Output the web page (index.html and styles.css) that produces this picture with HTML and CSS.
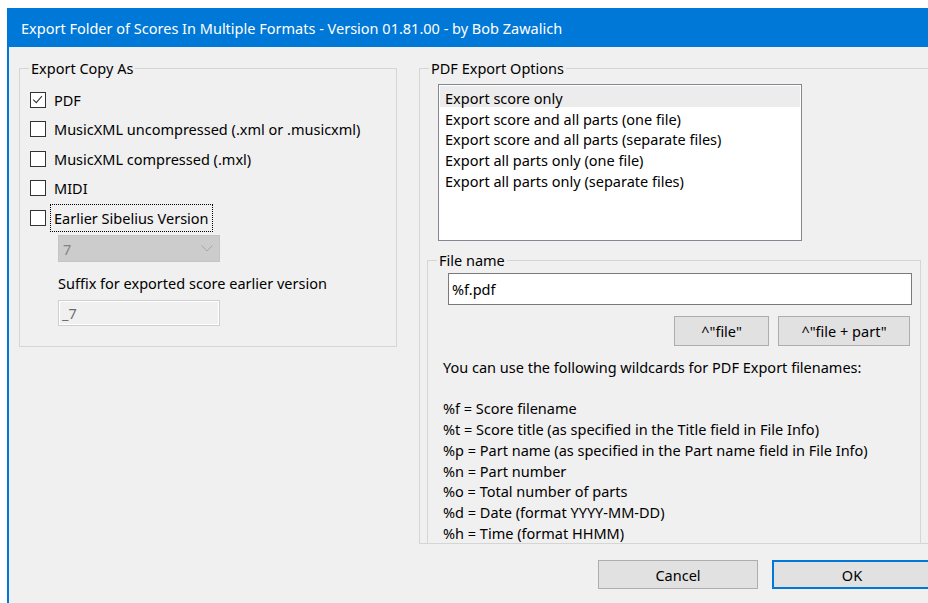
FILE: index.html
```html
<!DOCTYPE html>
<html lang="en">
<head>
<meta charset="utf-8">
<title>Export Folder of Scores In Multiple Formats</title>
<link rel="stylesheet" href="styles.css">
</head>
<body>
<div class="window">
  <div class="titlebar">Export Folder of Scores In Multiple Formats - Version 01.81.00 - by Bob Zawalich</div>
  <div class="client">
    <div class="columns">
      <fieldset class="group group-copy">
        <legend>Export Copy As</legend>
        <div class="group-body copy-body">
          <label class="check">
            <span class="box"><svg viewBox="0 0 16 16" width="14" height="14"><polyline points="2.5,7.5 6,11 12.5,3.5" fill="none" stroke="#333" stroke-width="1.2"/></svg></span>
            <span class="check-text">PDF</span>
          </label>
          <label class="check"><span class="box"></span><span class="check-text">MusicXML uncompressed (.xml or .musicxml)</span></label>
          <label class="check"><span class="box"></span><span class="check-text">MusicXML compressed (.mxl)</span></label>
          <label class="check"><span class="box"></span><span class="check-text">MIDI</span></label>
          <label class="check"><span class="box"></span><span class="check-text focused">Earlier Sibelius Version</span></label>
          <div class="sub">
            <div class="combo">
              <span>7</span>
              <svg viewBox="0 0 12 7" width="12" height="7"><polyline points="0.5,0.5 6,6 11.5,0.5" fill="none" stroke="#a6a6a6" stroke-width="1"/></svg>
            </div>
            <div class="sub-label">Suffix for exported score earlier version</div>
            <div class="textbox disabled">_7</div>
          </div>
        </div>
      </fieldset>

      <fieldset class="group group-pdf">
        <legend>PDF Export Options</legend>
        <div class="group-body pdf-body">
          <ul class="listbox">
            <li class="selected">Export score only</li>
            <li>Export score and all parts (one file)</li>
            <li>Export score and all parts (separate files)</li>
            <li>Export all parts only (one file)</li>
            <li>Export all parts only (separate files)</li>
          </ul>
          <fieldset class="group group-file">
            <legend>File name</legend>
            <div class="file-body">
              <div class="textbox filename">%f.pdf</div>
              <div class="macro-buttons">
                <button class="btn btn-file">^"file"</button>
                <button class="btn btn-part">^"file + part"</button>
              </div>
              <div class="help">
                <p>You can use the following wildcards for PDF Export filenames:</p>
                <p class="blank">&nbsp;</p>
                <p>%f = Score filename</p>
                <p>%t = Score title (as specified in the Title field in File Info)</p>
                <p>%p = Part name (as specified in the Part name field in File Info)</p>
                <p>%n = Part number</p>
                <p>%o = Total number of parts</p>
                <p>%d = Date (format YYYY-MM-DD)</p>
                <p>%h = Time (format HHMM)</p>
              </div>
            </div>
          </fieldset>
        </div>
      </fieldset>
    </div>
    <div class="footer">
      <button class="btn btn-dialog">Cancel</button>
      <button class="btn btn-dialog btn-default">OK</button>
    </div>
  </div>
</div>
</body>
</html>
```

FILE: styles.css
```css
html, body {
  margin: 0;
  padding: 0;
  background: #ffffff;
  overflow: hidden;
}

body {
  font-family: "Noto Sans", "Open Sans", sans-serif;
  font-size: 14.5px;
  color: #000;
}

.window {
  margin: 8px 0 0 7px;
  width: 940px;
  height: 595px;
  border-left: 2px solid #0078d7;
  display: flex;
  flex-direction: column;
  background: #f0f0f0;
}

.titlebar {
  height: 39px;
  margin-left: -2px;
  padding-left: 14px;
  background: #0078d7;
  color: #fff;
  font-size: 14.5px;
  line-height: 40px;
  white-space: nowrap;
}

.client {
  flex: 1;
  display: flex;
  flex-direction: column;
}

.columns {
  display: flex;
  align-items: flex-start;
  gap: 22px;
  margin-top: 11px;
  padding: 0 10px;
}

/* group boxes */
.group {
  margin: 0;
  padding: 0;
  min-width: 0;
  border: 1px solid #d5d5d5;
}

.group > legend {
  margin-left: 9px;
  padding: 0 2px;
  line-height: 20px;
}

.group-copy {
  width: 378px;
  box-sizing: border-box;
  flex: none;
}

.copy-body {
  padding: 7px 0 20px 10px;
}

.check {
  display: flex;
  align-items: center;
  height: 29.5px;
}

.box {
  width: 16px;
  height: 16px;
  box-sizing: border-box;
  border: 1px solid #333;
  background: #fff;
  display: flex;
  align-items: center;
  justify-content: center;
  flex: none;
}

.check-text {
  margin-left: 4px;
  padding: 3px 3px;
  line-height: 20px;
  border: 1px solid transparent;
  white-space: nowrap;
}

.check-text.focused {
  border: 1px dotted #000;
}

.sub {
  padding-left: 28px;
  margin-top: 2.5px;
}

.combo {
  width: 162px;
  height: 27px;
  box-sizing: border-box;
  border: 1px solid #c4c4c4;
  background: #cccccc;
  color: #838383;
  display: flex;
  align-items: center;
  justify-content: space-between;
  padding: 0 6px 0 4px;
}

.sub-label {
  margin-top: 11px;
  line-height: 20px;
}

.textbox {
  box-sizing: border-box;
  border: 1px solid #7a7a7a;
  background: #fff;
  display: flex;
  align-items: center;
  padding-left: 3px;
}

.textbox.disabled {
  margin-top: 7px;
  width: 162px;
  height: 26px;
  border-color: #cfcfcf;
  background: #f0f0f0;
  box-shadow: inset 0 0 0 1px #fff;
  color: #6d6d6d;
}

/* right column */
.group-pdf {
  flex: 1;
}

.pdf-body {
  height: 465px;
  overflow: hidden;
  padding-left: 18px;
}

.listbox {
  list-style: none;
  margin: 6px 0 0 0;
  padding: 1px;
  width: 364px;
  height: 157px;
  box-sizing: border-box;
  border: 1px solid #828790;
  background: #fff;
}

.listbox li {
  line-height: 16.7px;
  padding: 4px 0 0 5px;
  white-space: nowrap;
}

.listbox li.selected {
  background: #ececec;
}

.group-file {
  margin: 9px 0 0 -11px;
  width: 494px;
  box-sizing: border-box;
}

.file-body {
  padding: 3px 8px 0 20px;
}

.filename {
  height: 32px;
}

.macro-buttons {
  display: flex;
  justify-content: flex-end;
  gap: 9px;
  margin-top: 11px;
  padding-right: 2px;
}

.btn {
  font: inherit;
  color: #000;
  background: #e1e1e1;
  border: 1px solid #adadad;
  margin: 0;
  padding: 0;
  height: 30px;
}

.btn-file { width: 95px; }
.btn-part { width: 132px; }

.help {
  margin-top: 11px;
  margin-left: -5px;
}

.help p {
  margin: 0;
  line-height: 20.7px;
  white-space: nowrap;
}

/* dialog buttons */
.footer {
  display: flex;
  justify-content: flex-end;
  gap: 14px;
  margin-top: 16px;
  padding-right: 17px;
}

.btn-dialog {
  width: 160px;
  height: 29px;
}

.btn-default {
  border: 2px solid #0078d7;
}
```
